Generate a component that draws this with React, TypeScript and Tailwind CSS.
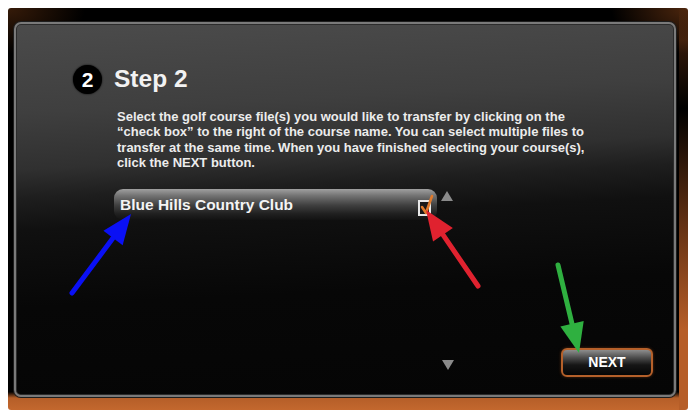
import React from "react";

const lines = [
  "Select the golf course file(s) you would like to transfer by clicking on the",
  "\u201Ccheck box\u201D to the right of the course name. You can select multiple files to",
  "transfer at the same time. When you have finished selecting your course(s),",
  "click the NEXT button.",
];

function Arrow({ x1, y1, x2, y2, color }: { x1: number; y1: number; x2: number; y2: number; color: string }) {
  const dx = x2 - x1;
  const dy = y2 - y1;
  const len = Math.hypot(dx, dy);
  const ux = dx / len;
  const uy = dy / len;
  const headLen = 30;
  const headW = 12;
  const bx = x2 - ux * headLen;
  const by = y2 - uy * headLen;
  const px = -uy * headW;
  const py = ux * headW;
  return (
    <g>
      <line x1={x1} y1={y1} x2={bx + ux * 4} y2={by + uy * 4} stroke={color} strokeWidth={5} strokeLinecap="round" />
      <polygon points={`${x2},${y2} ${bx + px},${by + py} ${bx - px},${by - py}`} fill={color} />
    </g>
  );
}

export default function App() {
  return (
    <div
      className="relative h-[416px] w-[698px] overflow-hidden bg-white pb-[6px] pl-[8px] pr-[10px] pt-[8px]"
      style={{ fontFamily: '"Liberation Sans", Arial, sans-serif' }}
    >
      <div className="h-full w-full rounded-[3px] pb-[13px] pl-[6px] pr-[12px] pt-[14px] [background:linear-gradient(to_bottom,transparent_0%,rgba(150,75,30,0.35)_8%,transparent_25%,rgba(170,85,35,0.6)_55%,#b65e28_80%)_right/9px_100%_no-repeat,radial-gradient(ellipse_at_top_right,rgba(140,70,25,0.55)_0%,transparent_8%),radial-gradient(ellipse_at_top_left,rgba(120,60,20,0.45)_0%,transparent_8%),linear-gradient(to_bottom,#000_0%,#000_95.5%,#b55e28_97%,#c3682e_100%)]">
        <div className="relative h-full w-full rounded-[7px] border-2 border-[#7a7a7a] bg-[linear-gradient(177deg,#4b4b4b_0%,#3f3f3f_22%,#303030_36%,#1e1e1e_43%,#101010_51%,#070707_70%,#050505_100%)] shadow-[0_0_0_1px_#1e1e1e,inset_0_0_0_1px_#2c2c2c]">
          <div className="flex flex-col pl-[57px] pt-[41px]">
            <div className="flex items-center gap-[12px]">
              <div className="flex h-[29px] w-[29px] items-center justify-center rounded-full bg-black text-[21px] font-bold leading-none text-white shadow-[0_0_2px_#000]">
                2
              </div>
              <div className="text-[24.5px] font-bold leading-none text-[#f2f2f2]">Step 2</div>
            </div>
            <div className="mt-[15px] pl-[44px] text-[13px] font-bold leading-[15.3px] text-[#ececec]">
              {lines.map((l, i) => (
                <div key={i} className="whitespace-nowrap">
                  {l}
                </div>
              ))}
            </div>
            <div className="mt-[19px] flex items-start pl-[41px]">
              <div className="flex h-[31px] w-[323px] items-center justify-between rounded-[9px] bg-[linear-gradient(to_bottom,#a0a0a0_0%,#727272_22%,#404040_52%,#202020_80%,#121212_100%)] pl-[6px] pr-[6px]">
                <span className="text-[15.5px] font-bold text-[#f4f4f4]">Blue Hills Country Club</span>
                <div className="relative mt-[6px] h-[16px] w-[13px] border-2 border-[#e8e8e8] bg-[#1a1a1a]">
                  <svg className="absolute -top-[8px] left-0" width="16" height="22" viewBox="0 0 16 22">
                    <path d="M2 13 L6 19 L12 2" fill="none" stroke="#e07a2c" strokeWidth="2.6" strokeLinecap="round" strokeLinejoin="round" />
                  </svg>
                </div>
              </div>
              <svg className="ml-[4px] mt-[2px]" width="12" height="10" viewBox="0 0 12 10">
                <polygon points="6,0 12,10 0,10" fill="#8a8a8a" />
              </svg>
            </div>
          </div>
          <svg className="absolute left-[426px] top-[336px]" width="12" height="10" viewBox="0 0 12 10">
            <polygon points="0,0 12,0 6,10" fill="#8a8a8a" />
          </svg>
          <div className="absolute left-[545px] top-[324px] flex h-[29px] w-[92px] items-center justify-center rounded-[6px] border-[2.5px] border-[#b5602a] bg-[linear-gradient(to_bottom,#8d8d8d_0%,#4e4e4e_30%,#161616_60%,#050505_100%)] text-[14px] font-bold text-white shadow-[0_0_3px_#5a2c10]">
            NEXT
          </div>
        </div>
      </div>
      <svg className="pointer-events-none absolute left-0 top-0" width="698" height="416">
        <Arrow x1={72} y1={293} x2={131} y2={214} color="#0a10f5" />
        <Arrow x1={478} y1={286} x2={426} y2={210} color="#e0222f" />
        <Arrow x1={558} y1={265} x2={579} y2={353} color="#2fb040" />
      </svg>
    </div>
  );
}
